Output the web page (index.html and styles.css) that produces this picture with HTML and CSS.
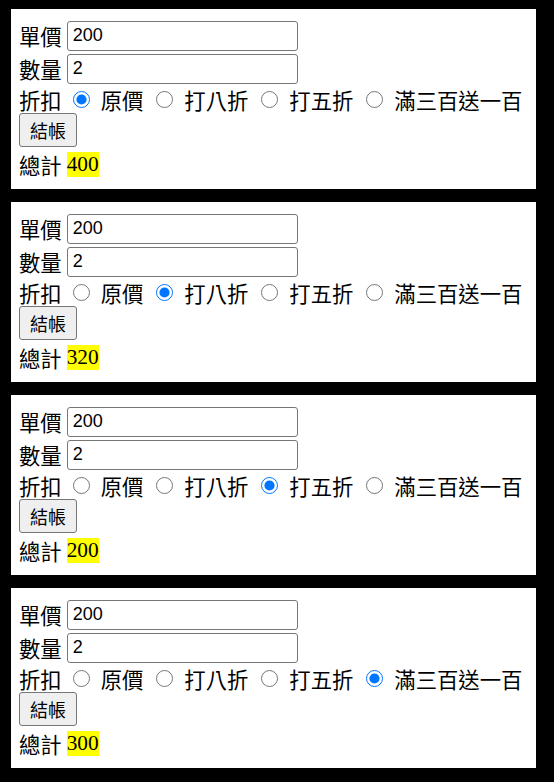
FILE: index.html
```html
<!DOCTYPE html>
<html lang="zh-Hant">
<head>
<meta charset="utf-8">
<title>結帳</title>
<link rel="stylesheet" href="styles.css">
</head>
<body>
<div class="panel">
  <div class="row"><span class="label">單價</span><input class="field" type="text" value="200"></div>
  <div class="row"><span class="label">數量</span><input class="field" type="text" value="2"></div>
  <div class="row radios"><span class="label">折扣</span>
    <label class="opt"><input type="radio" name="d1" checked><span>原價</span></label>
    <label class="opt"><input type="radio" name="d1"><span>打八折</span></label>
    <label class="opt"><input type="radio" name="d1"><span>打五折</span></label>
    <label class="opt"><input type="radio" name="d1"><span>滿三百送一百</span></label>
  </div>
  <div class="row btnrow"><button class="btn" type="button">結帳</button></div>
  <div class="row total"><span class="label">總計</span><span class="sum">400</span></div>
</div>
<div class="panel">
  <div class="row"><span class="label">單價</span><input class="field" type="text" value="200"></div>
  <div class="row"><span class="label">數量</span><input class="field" type="text" value="2"></div>
  <div class="row radios"><span class="label">折扣</span>
    <label class="opt"><input type="radio" name="d2"><span>原價</span></label>
    <label class="opt"><input type="radio" name="d2" checked><span>打八折</span></label>
    <label class="opt"><input type="radio" name="d2"><span>打五折</span></label>
    <label class="opt"><input type="radio" name="d2"><span>滿三百送一百</span></label>
  </div>
  <div class="row btnrow"><button class="btn" type="button">結帳</button></div>
  <div class="row total"><span class="label">總計</span><span class="sum">320</span></div>
</div>
<div class="panel">
  <div class="row"><span class="label">單價</span><input class="field" type="text" value="200"></div>
  <div class="row"><span class="label">數量</span><input class="field" type="text" value="2"></div>
  <div class="row radios"><span class="label">折扣</span>
    <label class="opt"><input type="radio" name="d3"><span>原價</span></label>
    <label class="opt"><input type="radio" name="d3"><span>打八折</span></label>
    <label class="opt"><input type="radio" name="d3" checked><span>打五折</span></label>
    <label class="opt"><input type="radio" name="d3"><span>滿三百送一百</span></label>
  </div>
  <div class="row btnrow"><button class="btn" type="button">結帳</button></div>
  <div class="row total"><span class="label">總計</span><span class="sum">200</span></div>
</div>
<div class="panel">
  <div class="row"><span class="label">單價</span><input class="field" type="text" value="200"></div>
  <div class="row"><span class="label">數量</span><input class="field" type="text" value="2"></div>
  <div class="row radios"><span class="label">折扣</span>
    <label class="opt"><input type="radio" name="d4"><span>原價</span></label>
    <label class="opt"><input type="radio" name="d4"><span>打八折</span></label>
    <label class="opt"><input type="radio" name="d4"><span>打五折</span></label>
    <label class="opt"><input type="radio" name="d4" checked><span>滿三百送一百</span></label>
  </div>
  <div class="row btnrow"><button class="btn" type="button">結帳</button></div>
  <div class="row total"><span class="label">總計</span><span class="sum">300</span></div>
</div>
</body>
</html>
```

FILE: styles.css
```css
html, body {
  background: #000;
}
body {
  margin: 9px 18px 0 11px;
  font-family: "Liberation Serif", "Noto Sans CJK TC", serif;
  font-size: 21.33px;
  color: #000;
}
.panel {
  background: #fff;
  height: 180px;
  box-sizing: border-box;
  padding: 10px 8px 0 8px;
  margin-bottom: 13px;
  display: flex;
  flex-direction: column;
}
.row {
  display: flex;
  align-items: center;
  height: 33px;
  line-height: 25px;
  white-space: nowrap;
}
.label {
  font-family: "Noto Sans CJK TC", sans-serif;
  margin-right: 5px;
}
.field {
  box-sizing: border-box;
  width: 231px;
  height: 30px;
  margin: 0;
  padding: 0 4px 0 5px;
  border: 1px solid #767676;
  border-radius: 3px;
  font-family: "Liberation Sans", Arial, sans-serif;
  font-size: 18px;
  color: #000;
  background: #fff;
}
.radios {
  height: 28px;
}
.opt {
  display: flex;
  align-items: center;
  font-family: "Noto Sans CJK TC", sans-serif;
}
.opt input {
  width: 17px;
  height: 17px;
  margin: 0 11px 0 13px;
  accent-color: #0075ff;
}
.label + .opt input {
  margin-left: 6px;
}
.btnrow {
  height: 38px;
  align-items: flex-start;
}
.btn {
  box-sizing: border-box;
  width: 58px;
  height: 34px;
  margin: 0;
  padding: 0;
  border: 1px solid #767676;
  border-radius: 3px;
  background: #efefef;
  font-family: "Noto Sans CJK TC", sans-serif;
  font-size: 18px;
  color: #000;
}
.total {
  height: 26px;
}
.sum {
  background: #ff0;
  line-height: 25px;
  font-family: "Liberation Serif", serif;
}
```
